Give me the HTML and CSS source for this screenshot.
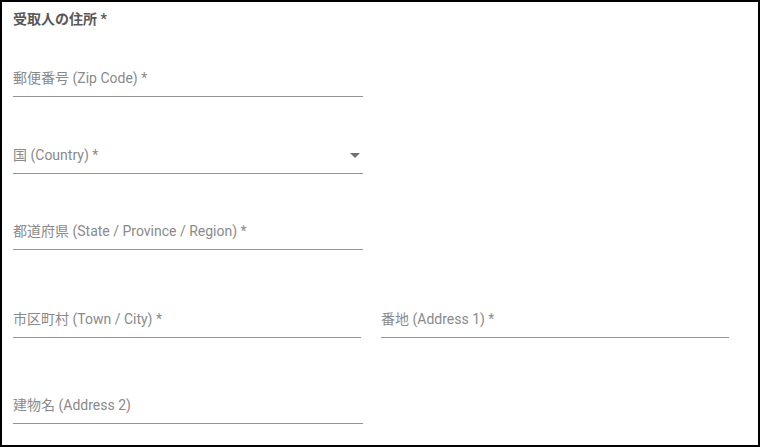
FILE: index.html
```html
<!DOCTYPE html>
<html lang="ja">
<head>
    <meta charset="UTF-8">
    <meta name="viewport" content="width=device-width, initial-scale=1.0">
    <title>受取人の住所</title>
    <link rel="stylesheet" href="styles.css">
</head>
<body>
    <form class="address-form">
        <div class="form-title">受取人の住所 *</div>

        <div class="field field-zip">
            <label class="field-label">郵便番号 (Zip Code) *</label>
        </div>

        <div class="field field-select field-country">
            <label class="field-label">国 (Country) *</label>
            <span class="select-arrow"></span>
        </div>

        <div class="field field-state">
            <label class="field-label">都道府県 (State / Province / Region) *</label>
        </div>

        <div class="field-row">
            <div class="field field-half">
                <label class="field-label">市区町村 (Town / City) *</label>
            </div>
            <div class="field field-half">
                <label class="field-label">番地 (Address 1) *</label>
            </div>
        </div>

        <div class="field field-building">
            <label class="field-label">建物名 (Address 2)</label>
        </div>
    </form>
</body>
</html>
```

FILE: styles.css
```css
html, body {
    margin: 0;
    height: 100%;
}
body {
    background-color: #ffffff;
    font-family: "Roboto", "Noto Sans CJK JP", sans-serif;
}
.address-form {
    box-sizing: border-box;
    height: 100vh;
    border: 2px solid #000000;
    padding: 7px 11px 0 11px;
}
.form-title {
    font-size: 14px;
    font-weight: bold;
    line-height: 20px;
    color: #595959;
}
.field {
    box-sizing: border-box;
    width: 350px;
    height: 29px;
    padding-bottom: 8px;
    border-bottom: 1px solid #949494;
    display: flex;
    align-items: flex-end;
    justify-content: space-between;
}
.field-label {
    font-size: 14px;
    line-height: 20px;
    color: #8a8a8a;
}
.field-zip {
    margin-top: 39px;
}
.field-country {
    margin-top: 48px;
}
.field-state {
    margin-top: 47px;
}
.field-row {
    display: flex;
    gap: 20px;
    margin-top: 59px;
}
.field-half {
    width: 348px;
}
.field-building {
    margin-top: 57px;
}
.select-arrow {
    width: 0;
    height: 0;
    border-left: 5px solid transparent;
    border-right: 5px solid transparent;
    border-top: 5px solid #707070;
    margin: 0 3px 7px 0;
}
```
